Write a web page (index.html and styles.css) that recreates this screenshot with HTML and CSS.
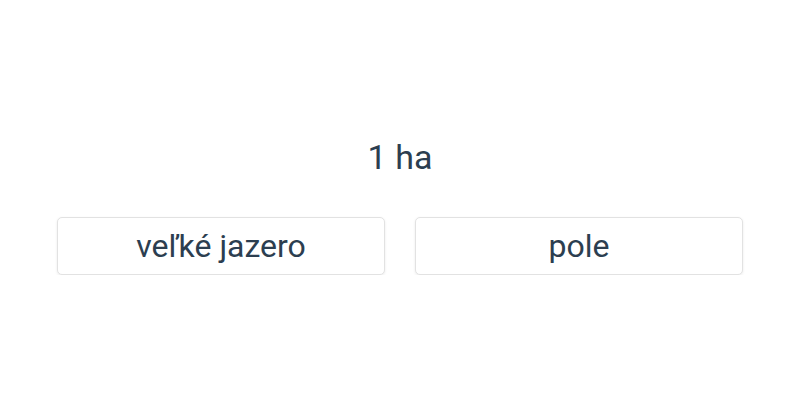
FILE: index.html
```html
<!DOCTYPE html>
<html lang="sk">
<head>
  <meta charset="UTF-8" />
  <meta name="viewport" content="width=device-width, initial-scale=1.0"/>
  <title>Kvíz</title>
  <link rel="stylesheet" href="styles.css">
</head>
<body>
  <main class="quiz">
    <div class="question">1 ha</div>
    <div class="answers">
      <button class="answer">veľké jazero</button>
      <button class="answer">pole</button>
    </div>
  </main>
</body>
</html>
```

FILE: styles.css
```css
body {
  font-family: Roboto, 'Noto Sans', sans-serif;
  margin: 0;
  padding: 0;
  background: #fff;
  color: #2c3e50;
}
.quiz {
  padding: 136px 57px 0;
}
.question {
  text-align: center;
  font-size: 34px;
  line-height: 42px;
}
.answers {
  display: grid;
  grid-template-columns: 1fr 1fr;
  gap: 30px;
  margin-top: 39px;
}
.answer {
  height: 58px;
  background: #fff;
  color: #2c3e50;
  border: 1px solid #e2e2e2;
  border-radius: 5px;
  box-shadow: 0 1px 3px rgba(0,0,0,0.08);
  font-family: Roboto, 'Noto Sans', sans-serif;
  font-size: 32px;
  padding: 0;
  cursor: pointer;
}
```
